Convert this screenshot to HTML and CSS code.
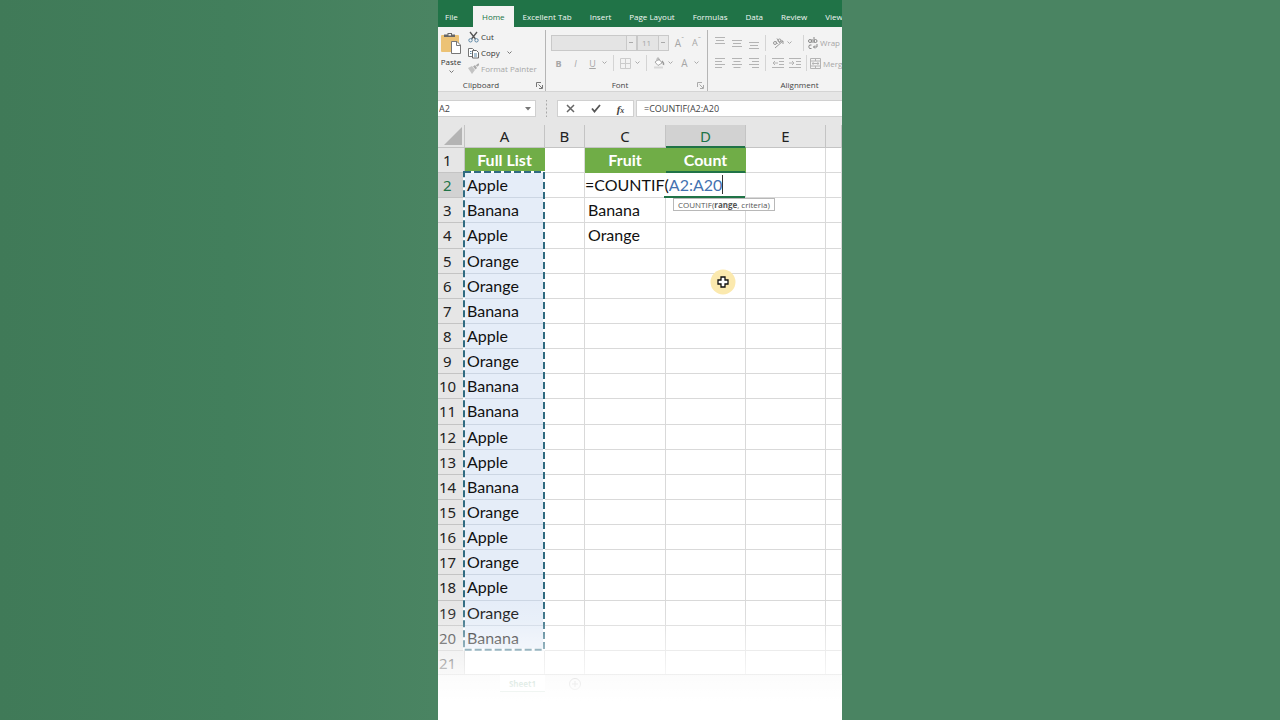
FILE: index.html
```html
<!DOCTYPE html>
<html lang="en">
<head>
<meta charset="utf-8">
<title>COUNTIF</title>
<link rel="stylesheet" href="styles.css">
</head>
<body>
<main class="app">
  <nav class="tabs" aria-label="Ribbon tabs">
    <button class="tab tab-file">File</button>
    <button class="tab tab-on">Home</button>
    <button class="tab">Excellent Tab</button>
    <button class="tab">Insert</button>
    <button class="tab">Page Layout</button>
    <button class="tab">Formulas</button>
    <button class="tab">Data</button>
    <button class="tab">Review</button>
    <button class="tab">View</button>
  </nav>

  <section class="ribbon" aria-label="Home">
    <div class="group group-clip">
      <div class="clip-body">
        <button class="paste">
          <svg width="20" height="22" viewBox="0 0 20 22"><rect x="0" y="3" width="18" height="17" rx="1" fill="#ecc275"/><path d="M3 5V2.500H6.500V1H11V2.500H14V5Z" fill="#666"/><rect x="7.500" y="2" width="2.500" height="1.500" fill="#f3f3f3"/><path d="M10.500 9.500H16L19.500 13V21.500H10.500Z" fill="#fff" stroke="#777"/><path d="M15.500 9.500V13.500H19.500" fill="none" stroke="#777"/></svg>
          <span>Paste</span>
          <svg class="chev" width="5" height="4" viewBox="0 0 5 4"><path d="M.5.500 2.500 2.500 4.500.5" /></svg>
        </button>
        <div class="clip-list">
          <button class="cmd"><svg width="11" height="12" viewBox="0 0 11 12" fill="none"><path d="M2 1 7.500 8M9 1 3.500 8" stroke="#555" stroke-width="1.300"/><circle cx="2.500" cy="9.300" r="1.700" stroke="#5b86a5"/><circle cx="8.500" cy="9.300" r="1.700" stroke="#5b86a5"/></svg><span>Cut</span></button>
          <button class="cmd"><svg width="11" height="12" viewBox="0 0 11 12"><path d="M.5 1.500H4.500L6 3V9.500H.5Z" fill="#fff" stroke="#777"/><path d="M4.500 3.500H8.500L10.500 5.500V11H4.500Z" fill="#fff" stroke="#666"/><path d="M2 4.500H3.500M2 6.500H3.500M6 7H9M6 9H9" stroke="#5b86a5"/></svg><span>Copy</span><svg class="chev" width="5" height="4" viewBox="0 0 5 4"><path d="M.5.500 2.500 2.500 4.500.5"/></svg></button>
          <button class="cmd off"><svg width="11" height="12" viewBox="0 0 11 12"><path d="M0 5 4 3 7 7 4 11Z" fill="#c3c3c3"/><path d="M5 3.500 7 2 9 5 7.500 6.500Z" fill="#aaa"/><path d="M8.500 3 11 1" stroke="#aaa" stroke-width="2"/></svg><span>Format Painter</span></button>
        </div>
      </div>
      <div class="label"><span>Clipboard</span><svg width="7" height="7" viewBox="0 0 7 7" class="launch"><path d="M.5 5V.5H5M2.500 2.500 6 6M6.500 3V6.500H3"/></svg></div>
    </div>

    <div class="group group-font off">
      <div class="line">
        <select class="combo combo-name" aria-label="Font name"><option></option></select>
        <select class="combo combo-size" aria-label="Font size"><option>11</option></select>
        <button class="tool big grow">A<sup>ˆ</sup></button>
        <button class="tool grow">A<sup>ˇ</sup></button>
      </div>
      <div class="line">
        <button class="tool"><b>B</b></button>
        <button class="tool"><i>I</i></button>
        <button class="tool"><u>U</u></button>
        <svg class="chev" width="5" height="4" viewBox="0 0 5 4"><path d="M.5.500 2.500 2.500 4.500.5"/></svg>
        <span class="sep"></span>
        <button class="tool"><svg width="11" height="11" viewBox="0 0 11 11" fill="none" stroke="#ccc"><path d="M.5.500H10.500V10.500H.5ZM5.500.5V10.500M.5 5.500H10.500"/></svg></button>
        <svg class="chev" width="5" height="4" viewBox="0 0 5 4"><path d="M.5.500 2.500 2.500 4.500.5"/></svg>
        <span class="sep"></span>
        <button class="tool"><svg width="12" height="12" viewBox="0 0 12 12" fill="none"><path d="M2 5 6 2 9 6 5 8.500Z" fill="#fff" stroke="#aaa"/><path d="M4 4V1.500Q5 0 6 1.500V4" stroke="#aaa"/><path d="M9 4Q11 6 10.500 8" stroke="#999" stroke-width="1.500"/><path d="M1 10.500H10" stroke="#d8d8d8" stroke-width="2"/></svg></button>
        <svg class="chev" width="5" height="4" viewBox="0 0 5 4"><path d="M.5.500 2.500 2.500 4.500.5"/></svg>
        <button class="tool big">A</button>
        <svg class="chev" width="5" height="4" viewBox="0 0 5 4"><path d="M.5.500 2.500 2.500 4.500.5"/></svg>
      </div>
      <div class="label"><span>Font</span><svg width="7" height="7" viewBox="0 0 7 7" class="launch"><path d="M.5 5V.5H5M2.500 2.500 6 6M6.500 3V6.500H3"/></svg></div>
    </div>

    <div class="group group-align off">
      <div class="line">
        <button class="tool"><svg class="bars" width="10" height="12" viewBox="0 0 10 12"><path d="M0 .5H10M1 3.500H9M0 6.500H10"/></svg></button>
        <button class="tool"><svg class="bars" width="10" height="12" viewBox="0 0 10 12"><path d="M0 3.500H10M1 6.500H9M0 9.500H10"/></svg></button>
        <button class="tool"><svg class="bars" width="10" height="12" viewBox="0 0 10 12"><path d="M0 5.500H10M1 8.500H9M0 11.500H10"/></svg></button>
        <span class="sep"></span>
        <button class="tool"><svg width="12" height="12" viewBox="0 0 12 12" fill="none" stroke="#999"><circle cx="3" cy="6" r="1.500"/><path d="M3.500 4 5.500 7M5 1.500 8 6"/><circle cx="7.500" cy="3.500" r="1.500"/><path d="M3 11 11 4M11 7V4H8"/></svg></button>
        <svg class="chev" width="5" height="4" viewBox="0 0 5 4"><path d="M.5.500 2.500 2.500 4.500.5"/></svg>
        <span class="sep sep-end"></span>
        <button class="cmd"><svg width="11" height="12" viewBox="0 0 10 12" fill="none" stroke="#888"><circle cx="2.500" cy="4" r="1.500"/><path d="M4.500 2V6M6.500 0V6M4 8H2Q.5 10 2 11.500H4M9.500 7V10H6M7.500 8.500 6 10 7.500 11.500"/><circle cx="8" cy="4" r="1.500"/></svg><span>Wrap</span></button>
      </div>
      <div class="line">
        <button class="tool"><svg class="bars" width="10" height="10" viewBox="0 0 10 10"><path d="M0 .5H10M0 3.500H7M0 6.500H10M0 9.500H7"/></svg></button>
        <button class="tool"><svg class="bars" width="10" height="10" viewBox="0 0 10 10"><path d="M0 .5H10M1.500 3.500H8.500M0 6.500H10M1.500 9.500H8.500"/></svg></button>
        <button class="tool"><svg class="bars" width="10" height="10" viewBox="0 0 10 10"><path d="M0 .5H10M3 3.500H10M0 6.500H10M3 9.500H10"/></svg></button>
        <span class="sep"></span>
        <button class="tool"><svg class="bars" width="12" height="10" viewBox="0 0 12 10"><path d="M0 .5H12M7 3.500H12M7 6.500H12M0 9.500H12M1 5H6M3 3 1 5 3 7"/></svg></button>
        <button class="tool"><svg class="bars" width="12" height="10" viewBox="0 0 12 10"><path d="M0 .5H12M7 3.500H12M7 6.500H12M0 9.500H12M0 5H5M3 3 5 5 3 7"/></svg></button>
        <span class="sep"></span>
        <button class="cmd"><svg class="bars" width="11" height="11" viewBox="0 0 11 11"><path d="M.5.500H10.500V10.500H.5ZM.5 3H10.500M.5 8H10.500M5.500.5V3M5.500 8V10.500M2 5.500H9M3.500 4.500 2 5.500 3.500 6.500M7.500 4.500 9 5.500 7.500 6.500"/></svg><span>Merg</span></button>
      </div>
      <div class="label"><span>Alignment</span></div>
    </div>
  </section>

  <section class="formula" aria-label="Formula bar">
    <div class="namebox"><input aria-label="Name box" value="A2"><svg width="6" height="4" viewBox="0 0 6 4"><path d="M0 0H6L3 3.500Z" fill="#777"/></svg></div>
    <span class="grip"></span>
    <div class="fx">
      <button aria-label="Cancel"><svg width="9" height="9" viewBox="0 0 9 9"><path d="M1 1 8 8M8 1 1 8" stroke="#666" stroke-width="1.500"/></svg></button>
      <button aria-label="Enter"><svg width="10" height="9" viewBox="0 0 10 9"><path d="M1 4.500 3.500 7.500 9 1" fill="none" stroke="#555" stroke-width="1.800"/></svg></button>
      <button aria-label="Insert function"><i>f<small>x</small></i></button>
    </div>
    <input class="bar" aria-label="Formula" value="=COUNTIF(A2:A20">
  </section>

  <section class="sheet">
    <table class="grid">
      <colgroup><col class="c-num"><col class="c-a"><col class="c-b"><col class="c-c"><col class="c-d"><col class="c-e"><col></colgroup>
      <thead><tr><th class="corner"><svg width="18" height="18" viewBox="0 0 18 18"><path d="M18 0V18H0Z" fill="#b4b4b4"/></svg></th><th>A</th><th>B</th><th>C</th><th class="on">D</th><th>E</th><th></th></tr></thead>
      <tbody>
        <tr><th>1</th><td class="head">Full List</td><td></td><td class="head">Fruit</td><td class="head head-on">Count</td><td></td><td></td></tr>
        <tr><th class="on">2</th><td class="pick first">Apple<svg class="ants"><rect class="ants-base" x="1" y="1" width="100%" height="100%"/><rect class="ants-dash" x="1" y="1" width="100%" height="100%"/></svg></td><td></td><td class="edit" colspan="2"><span class="typed">=COUNTIF(<span class="ref">A2:A20</span></span><span class="active"></span><span class="tip">COUNTIF(<b>range</b>, criteria)</span></td><td></td><td></td></tr>
        <tr><th>3</th><td class="pick">Banana</td><td></td><td>Banana</td><td></td><td></td><td></td></tr>
        <tr><th>4</th><td class="pick">Apple</td><td></td><td>Orange</td><td></td><td></td><td></td></tr>
        <tr><th>5</th><td class="pick">Orange</td><td></td><td></td><td></td><td></td><td></td></tr>
        <tr><th>6</th><td class="pick">Orange</td><td></td><td></td><td class="has-pointer"><svg class="pointer" width="26" height="26" viewBox="0 0 26 26"><circle cx="13" cy="13" r="12.500" fill="#fbe9ae"/><path d="M11 8H15V11H18V15H15V18H11V15H8V11H11Z" fill="#fff" stroke="#111" stroke-width="1.300"/></svg></td><td></td><td></td></tr>
        <tr><th>7</th><td class="pick">Banana</td><td></td><td></td><td></td><td></td><td></td></tr>
        <tr><th>8</th><td class="pick">Apple</td><td></td><td></td><td></td><td></td><td></td></tr>
        <tr><th>9</th><td class="pick">Orange</td><td></td><td></td><td></td><td></td><td></td></tr>
        <tr><th>10</th><td class="pick">Banana</td><td></td><td></td><td></td><td></td><td></td></tr>
        <tr><th>11</th><td class="pick">Banana</td><td></td><td></td><td></td><td></td><td></td></tr>
        <tr><th>12</th><td class="pick">Apple</td><td></td><td></td><td></td><td></td><td></td></tr>
        <tr><th>13</th><td class="pick">Apple</td><td></td><td></td><td></td><td></td><td></td></tr>
        <tr><th>14</th><td class="pick">Banana</td><td></td><td></td><td></td><td></td><td></td></tr>
        <tr><th>15</th><td class="pick">Orange</td><td></td><td></td><td></td><td></td><td></td></tr>
        <tr><th>16</th><td class="pick">Apple</td><td></td><td></td><td></td><td></td><td></td></tr>
        <tr><th>17</th><td class="pick">Orange</td><td></td><td></td><td></td><td></td><td></td></tr>
        <tr><th>18</th><td class="pick">Apple</td><td></td><td></td><td></td><td></td><td></td></tr>
        <tr><th>19</th><td class="pick">Orange</td><td></td><td></td><td></td><td></td><td></td></tr>
        <tr><th>20</th><td class="pick">Banana</td><td></td><td></td><td></td><td></td><td></td></tr>
        <tr><th>21</th><td></td><td></td><td></td><td></td><td></td><td></td></tr>
      </tbody>
    </table>
  </section>

  <footer class="sheets">
    <button class="sheet-tab">Sheet1</button>
    <button class="add" aria-label="New sheet"><svg width="12" height="12" viewBox="0 0 12 12" fill="none" stroke="#777"><circle cx="6" cy="6" r="5.500"/><path d="M6 3V9M3 6H9"/></svg></button>
  </footer>
  <div class="fade"></div>
</main>
</body>
</html>
```
FILE: styles.css
```css
* { box-sizing: border-box; }

body {
  margin: 0;
  height: 100vh;
  display: grid;
  grid-template-columns: 1fr minmax(0, 404px) 1fr;
  background: linear-gradient(90deg, #407a58 0, #427f5c 18%, #4a8462 34%, #4a8462 100%);
  font-family: "Open Sans", "Noto Sans", sans-serif;
  font-size: 8px;
  color: #333;
  overflow: hidden;
}

button, input, select {
  font: inherit;
  color: inherit;
  background: none;
  border: 0;
  padding: 0;
  margin: 0;
}

svg { flex: none; }

.app {
  grid-column: 2;
  position: relative;
  display: flex;
  flex-direction: column;
  height: 100vh;
  overflow: hidden;
  background: #e6e6e6;
}

.tabs {
  flex: none;
  display: flex;
  height: 27px;
  padding-top: 6px;
  background: #207347;
  overflow: hidden;
}
.tab { flex: none; padding: 0 9px; color: #f2f8f4; white-space: nowrap; }
.tab-file { width: 35px; padding: 0 0 0 7px; text-align: left; }
.tab-on { background: #f3f3f3; color: #207347; }

.ribbon {
  flex: none;
  display: flex;
  height: 65px;
  padding-top: 3px;
  background: #f3f3f3;
  border-bottom: 1px solid #d4d4d4;
  overflow: hidden;
}
.group { flex: none; display: flex; flex-direction: column; border-right: 1px solid #b5b5b5; }
.group-clip { width: 108px; }
.group-font { width: 162px; padding-left: 5px; }
.group-align { width: 180px; padding-left: 4px; }
.clip-body { display: flex; height: 50px; gap: 4px; }
.paste { width: 26px; display: flex; flex-direction: column; align-items: center; justify-content: flex-start; gap: 2px; padding-top: 2px; line-height: 12px; }
.clip-list { flex: 1; display: flex; flex-direction: column; }
.cmd { display: flex; align-items: center; gap: 2px; height: 16px; white-space: nowrap; }
.clip-list .cmd { line-height: 12px; padding-bottom: 2px; }
.cmd .chev { margin-left: 5px; }
.chev { fill: none; stroke: #777; }
.off { color: #a6a6a6; }
.off .chev { stroke: #aaa; }
.label { display: flex; height: 12px; align-items: center; color: #444; line-height: 12px; }
.label span { flex: 1; text-align: center; }
.group-clip .label span { padding-right: 12px; }
.group-clip .label { padding-right: 2px; }
.group-font .label span { padding-right: 8px; }
.group-font .label { padding-right: 3px; }
.launch { fill: none; stroke: #777; }
.off .launch { stroke: #aaa; }

.line { display: flex; align-items: center; height: 26px; }
.line + .line { height: 16px; margin-bottom: 8px; }
.tool { width: 17px; height: 16px; display: flex; align-items: center; justify-content: center; flex: none; font-size: 9px; }
.line .tool:first-child { margin-left: -1px; }
.tool.big { font-size: 10px; }
.grow sup { font-size: 8px; line-height: 8px; align-self: flex-start; }
.combo-size { margin-right: 2px; }
.sep { width: 1px; height: 16px; margin: 0 3px; background: #d4d4d4; flex: none; }
.sep-end { margin-left: 8px; }
.line .chev { margin: 0 3px 0 1px; }
.combo {
  appearance: none;
  height: 16px;
  padding-left: 4px;
  border: 1px solid #c9c9c9;
  border-radius: 0;
  background: linear-gradient(#aaa, #aaa) right 3px center / 4px 1px no-repeat, linear-gradient(90deg, #c9c9c9 1px, #e9e9e9 1px) right / 10px 100% no-repeat, #e4e4e4;
}
.combo-name { width: 86px; }
.combo-size { width: 32px; }
.bars { fill: none; stroke: #b4b4b4; }

.formula { flex: none; display: flex; height: 33px; padding: 8px 0; color: #444; font-size: 9px; }
.namebox { width: 98px; display: flex; align-items: center; background: #fff; border: 1px solid #d0d0d0; border-left: 0; padding: 0 4px 0 1px; }
.namebox input { flex: 1; min-width: 0; }
.grip { width: 21px; background: radial-gradient(circle, #a8a8a8 1px, transparent 1px) center / 21px 4px; }
.fx { width: 77px; display: flex; background: #fff; border: 1px solid #d0d0d0; }
.fx button { flex: 1; display: flex; align-items: center; justify-content: center; }
.fx i { font: italic bold 11px "Liberation Serif", serif; }
.fx small { font-size: 8px; }
.bar { flex: 1; min-width: 0; margin-left: 2px; padding-left: 7px; background: #fff; border: 1px solid #d0d0d0; border-right: 0; }

.sheet { flex: 1; min-height: 0; background: #fff; }
.grid {
  width: 100%;
  height: calc(100% + 2px);
  table-layout: fixed;
  border-collapse: separate;
  border-spacing: 0;
  font: 16px/18px Lato, "Open Sans", sans-serif;
  color: #111;
}
.c-num { width: 27px; }
.c-a { width: 80px; }
.c-b { width: 40px; }
.c-c { width: 81px; }
.c-d, .c-e { width: 80px; }
.grid th { padding: 0; font: 15px/18px "Noto Sans", sans-serif; background: #e6e6e6; border-right: 1px solid #c4c4c4; border-bottom: 1px solid #c4c4c4; color: #222; }
.grid tbody th { text-align: left; padding-left: 1px; }
.grid tbody tr:nth-child(-n+9) th { padding-left: 5px; }
.grid thead tr { height: 23px; }
.grid th.corner { text-align: right; line-height: 0; vertical-align: bottom; padding: 0 2px 2px 0; }
.grid th.on { background: #d2d2d2; color: #207347; }
.grid thead th.on { box-shadow: inset 0 -1px #207347; border-bottom-color: #207347; }
.grid tbody th.on { border-right: 2px solid #207347; }
.grid td { padding: 0 0 0 3px; border-right: 1px solid #d9d9d9; border-bottom: 1px solid #d9d9d9; white-space: nowrap; }
.grid td.head { padding: 0; background: #70ad47; border-color: #70ad47; color: #fff; font-weight: 700; text-align: center; }
.grid td.head-on { box-shadow: inset 0 -1px #207347; border-bottom-color: #207347; }
.grid td.pick { padding-left: 2px; background: #e5edf8; border-bottom-color: #ccd6e3; }
.grid td.first { position: relative; }
.ants { position: absolute; left: -2px; top: -2px; width: calc(100% + 1px); height: calc(1900% + 19px); overflow: visible; pointer-events: none; }
.ants rect { fill: none; stroke-width: 2px; }
.ants-base { stroke: #fff; }
.ants-dash { stroke: #2f6a80; stroke-dasharray: 7 3; }
.grid td.edit { position: relative; padding-left: 0; }
.ref { color: #4472b0; }
.typed { border-right: 1px solid #333; }
.active { position: absolute; right: 0; bottom: -1px; width: 81px; height: 2px; background: #207347; }
.tip { position: absolute; left: 88px; top: 25px; z-index: 1; height: 13px; padding: 0 4px; background: #fff; border: 1px solid #b8b8b8; font: 8px/11px "Open Sans", sans-serif; color: #555; }
.grid td.has-pointer { position: relative; }
.pointer { position: absolute; left: 44px; top: -5px; }

.sheets { flex: none; position: relative; display: flex; height: 46px; align-items: flex-start; padding-left: 62px; gap: 24px; background: #eee; border-top: 1px solid #bbb; }
.sheet-tab { width: 45px; height: 17px; background: #fff; border-bottom: 1px solid #207347; color: #207347; font-weight: 700; }
.add { padding-top: 3px; line-height: 0; }
.fade {
  position: absolute;
  left: 0;
  right: 0;
  bottom: 0;
  height: 120px;
  background: linear-gradient(rgba(255, 255, 255, 0) 0, rgba(255, 255, 255, .12) 16%, rgba(255, 255, 255, .4) 33%, rgba(255, 255, 255, .66) 54%, rgba(255, 255, 255, .86) 68%, #fff 84%);
  pointer-events: none;
}
```
